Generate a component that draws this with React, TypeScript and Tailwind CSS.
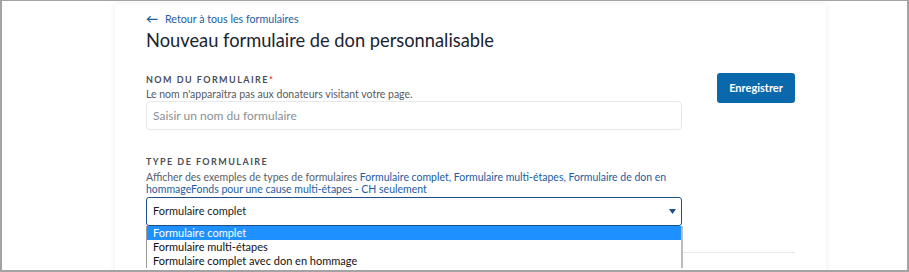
export default function App() {
  return (
    <div
      className="w-[909px] h-[272px] overflow-hidden bg-white border-l-2 border-r-2 border-t-[1px] border-b-2 border-[#a3a3a3]"
      style={{ fontFamily: 'Lato, "Open Sans", sans-serif' }}
    >
      <div className="ml-[113px] mt-[3px] w-[711px] h-[300px] rounded-t bg-white shadow-[0_0_5px_2px_rgba(0,0,0,0.045)] px-[31px] pt-[8px]">
        <a className="flex h-[14px] items-center gap-[7px] text-[10.7px] text-[#1d5c9e] leading-[14px]">
          <span className="text-[12px] font-bold">←</span>
          <span>Retour à tous les formulaires</span>
        </a>
        <h1 className="mt-[2px] text-[18.3px] leading-[24px] text-[#1a2430]">
          Nouveau formulaire de don personnalisable
        </h1>

        <div className="mt-[22px] flex items-start justify-between">
          <div className="w-[536px]">
            <div className="text-[9px] font-bold tracking-[0.16em] text-[#4a4f57] leading-[12px]">
              NOM DU FORMULAIRE<span className="text-[#d33]">*</span>
            </div>
            <div className="mt-[2px] text-[10.5px] leading-[13px] text-[#555b63]">
              Le nom n'apparaîtra pas aux donateurs visitant votre page.
            </div>
            <div className="h-[29px] border border-[#e6e8eb] rounded flex items-center px-[6px] text-[12px] text-[#8a8f96]">
              Saisir un nom du formulaire
            </div>
          </div>
          <button className="mt-[-1px] w-[78px] h-[30px] rounded-[3px] bg-[#0a69ad] text-white text-[11px] font-bold">
            Enregistrer
          </button>
        </div>

        <div className="relative mt-[26px] w-[536px]">
          <div className="text-[9px] font-bold tracking-[0.16em] text-[#4a4f57] leading-[12px]">
            TYPE DE FORMULAIRE
          </div>
          <p className="mt-[3px] text-[10.5px] leading-[12px] text-[#5a6068]">
            Afficher des exemples de types de formulaires{' '}
            <span className="text-[#1d5c9e]">
              Formulaire complet, Formulaire multi-étapes, Formulaire de don en hommageFonds pour une cause multi-étapes - CH seulement
            </span>
          </p>
          <div className="mt-[2px] h-[29px] border-[1.5px] border-[#1f4f86] rounded-[3px] flex items-center justify-between pl-[6px] pr-[5px] text-[11px] text-[#1a1a1a]">
            <span>Formulaire complet</span>
            <svg width="7" height="5" viewBox="0 0 7 5">
              <path d="M0 0 H7 L3.5 5 Z" fill="#1f4f86" />
            </svg>
          </div>
          <div className="absolute left-0 top-full w-[537px] bg-white border-l border-[#9a9a9a] border-r-2 border-r-[#bcbcbc] text-[11px] leading-[14px] text-[#111] z-10">
            <div className="bg-[#1e90ff] text-white px-[6px]">Formulaire complet</div>
            <div className="px-[6px]">Formulaire multi-étapes</div>
            <div className="px-[6px]">Formulaire complet avec don en hommage</div>
          </div>
        </div>
        <div className="mt-[26px] h-px bg-[#e8e9ec]" />
      </div>
    </div>
  );
}
